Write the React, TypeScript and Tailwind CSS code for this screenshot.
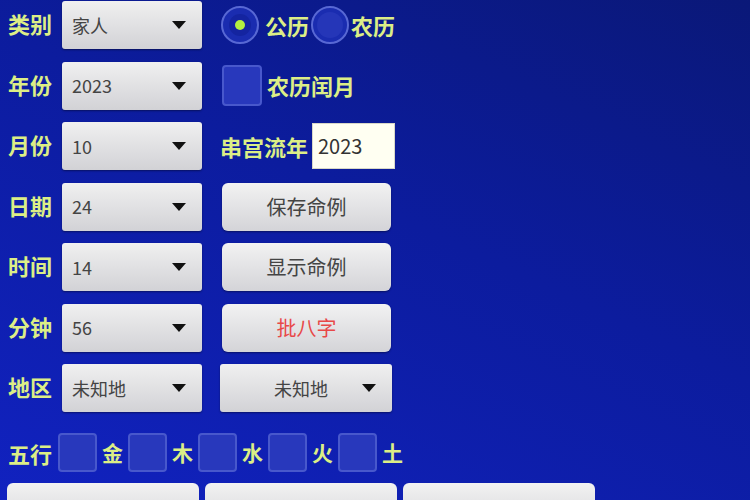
import React from "react";

const font = { fontFamily: '"Noto Sans CJK SC", "Noto Sans", sans-serif' };

function Arrow() {
  return (
    <svg width="14" height="8" viewBox="0 0 14 8" className="shrink-0">
      <path d="M0 0 L14 0 L7 8 Z" fill="#111" />
    </svg>
  );
}

function Spinner({ value, w = "w-[140px]", center = false }: { value: string; w?: string; center?: boolean }) {
  return (
    <div
      className={`${w} h-[48px] rounded-[3px] bg-gradient-to-b from-[#f0f0f0] to-[#d2d2d6] shadow-[0_1px_2px_rgba(0,0,0,0.4)] flex items-center pl-[10px] pr-[16px]`}
    >
      <span className={`flex-1 text-[18px] text-[#444] ${center ? "text-center pl-[10px]" : ""}`}>{value}</span>
      <Arrow />
    </div>
  );
}

function Label({ children }: { children: React.ReactNode }) {
  return <span className="text-[22px] font-bold text-[#dcee86] leading-none">{children}</span>;
}

function Btn({ children, red = false }: { children: React.ReactNode; red?: boolean }) {
  return (
    <div className="w-[169px] h-[48px] rounded-[6px] bg-gradient-to-b from-[#f2f2f2] to-[#d4d4d8] shadow-[0_1px_2px_rgba(0,0,0,0.4)] flex items-center justify-center">
      <span className={`text-[20px] ${red ? "text-[#e84848]" : "text-[#444]"}`}>{children}</span>
    </div>
  );
}

function Radio({ checked }: { checked: boolean }) {
  return (
    <div className="w-[38px] h-[38px] rounded-full border-2 border-[#5868d4] bg-[#1a2cb0] flex items-center justify-center shrink-0">
      {checked ? (
        <div className="w-[22px] h-[22px] rounded-full bg-[#1424a0] flex items-center justify-center">
          <div className="w-[10px] h-[10px] rounded-full bg-[#b4f040]" />
        </div>
      ) : (
        <div className="w-[26px] h-[26px] rounded-full bg-[#2536b8]" />
      )}
    </div>
  );
}

function Box({ w = "w-[39px]", h = "h-[39px]" }: { w?: string; h?: string }) {
  return <div className={`${w} ${h} rounded-[4px] border-2 border-[#4858cc] bg-[#2838bc] shrink-0`} />;
}

export default function App() {
  const rows: { label: string; value: string; right: React.ReactNode }[] = [
    {
      label: "类别",
      value: "家人",
      right: (
        <div className="flex items-center -ml-[1px]">
          <Radio checked />
          <span className="ml-[6px] text-[22px] font-bold text-[#dcee86]">公历</span>
          <div className="ml-[2px]">
            <Radio checked={false} />
          </div>
          <span className="ml-[2px] text-[22px] font-bold text-[#dcee86]">农历</span>
        </div>
      ),
    },
    {
      label: "年份",
      value: "2023",
      right: (
        <div className="flex items-center">
          <Box w="w-[40px]" h="h-[41px]" />
          <span className="ml-[5px] text-[22px] font-bold text-[#dcee86]">农历闰月</span>
        </div>
      ),
    },
    {
      label: "月份",
      value: "10",
      right: (
        <div className="flex items-center -ml-[2px]">
          <span className="text-[22px] font-bold text-[#dcee86]">串宫流年</span>
          <div className="ml-[4px] w-[83px] h-[46px] bg-[#fffff2] border border-[#d8d8c8] flex items-center pl-[5px]">
            <span className="text-[20px] text-[#333]">2023</span>
          </div>
        </div>
      ),
    },
    { label: "日期", value: "24", right: <Btn>保存命例</Btn> },
    { label: "时间", value: "14", right: <Btn>显示命例</Btn> },
    { label: "分钟", value: "56", right: <Btn red>批八字</Btn> },
  ];

  const wuxing = ["金", "木", "水", "火", "土"];

  return (
    <div
      style={font}
      className="w-[750px] h-[500px] overflow-hidden bg-[linear-gradient(205deg,#0a1878_0%,#0c1c9e_45%,#1122c0_100%)]"
    >
      <div className="flex flex-col pt-[1px] gap-[12.5px]">
        {rows.map((r) => (
          <div key={r.label} className="flex items-center h-[48px]">
            <div className="w-[62px] pl-[8px]">
              <Label>{r.label}</Label>
            </div>
            <Spinner value={r.value} />
            <div className="ml-[20px]">{r.right}</div>
          </div>
        ))}
        <div className="flex items-center h-[48px]">
          <div className="w-[62px] pl-[8px]">
            <Label>地区</Label>
          </div>
          <Spinner value="未知地" />
          <div className="ml-[18px]">
            <Spinner value="未知地" w="w-[172px]" center />
          </div>
        </div>
      </div>
      <div className="flex items-center mt-[21px] pl-[8px] h-[39px]">
        <Label>五行</Label>
        <div className="flex items-center ml-[6px]">
          {wuxing.map((c) => (
            <div key={c} className="flex items-center">
              <Box />
              <span className="w-[31px] text-center text-[21px] font-bold text-[#dcee86]">{c}</span>
            </div>
          ))}
        </div>
      </div>
      <div className="flex mt-[11px] pl-[7px] gap-[6px]">
        {["节气", "流月盘", "大运流年"].map((t) => (
          <div
            key={t}
            className="w-[192px] h-[48px] rounded-[6px] bg-gradient-to-b from-[#f2f2f2] to-[#d4d4d8] flex items-center justify-center pt-[26px]"
          >
            <span className="text-[20px] text-[#444]">{t}</span>
          </div>
        ))}
      </div>
    </div>
  );
}
